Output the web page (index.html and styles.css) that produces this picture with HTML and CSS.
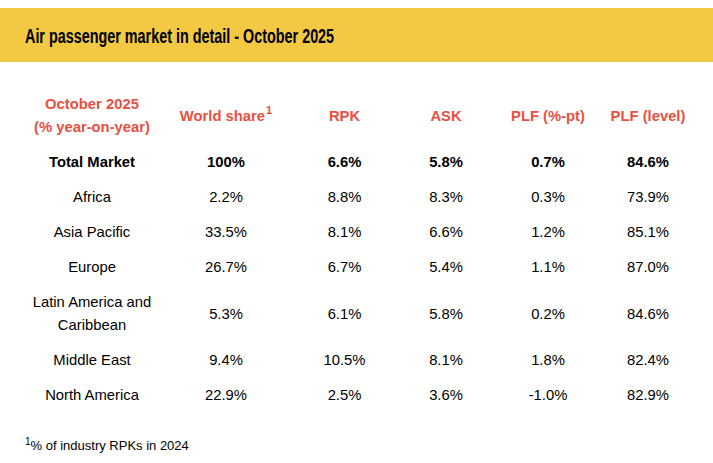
FILE: index.html
```html
<!DOCTYPE html>
<html lang="en">
<head>
<meta charset="utf-8">
<title>Air passenger market in detail - October 2025</title>
<link rel="stylesheet" href="styles.css">
</head>
<body>
<div class="page">
  <header class="band">
    <h1 class="title">Air passenger market in detail - October 2025</h1>
  </header>
  <div class="table">
    <div class="cell head">October 2025<br>(% year-on-year)</div>
    <div class="cell head"><span>World share<sup>1</sup></span></div>
    <div class="cell head">RPK</div>
    <div class="cell head">ASK</div>
    <div class="cell head">PLF (%-pt)</div>
    <div class="cell head">PLF (level)</div>

    <div class="cell bold">Total Market</div>
    <div class="cell bold">100%</div>
    <div class="cell bold">6.6%</div>
    <div class="cell bold">5.8%</div>
    <div class="cell bold">0.7%</div>
    <div class="cell bold">84.6%</div>

    <div class="cell">Africa</div>
    <div class="cell">2.2%</div>
    <div class="cell">8.8%</div>
    <div class="cell">8.3%</div>
    <div class="cell">0.3%</div>
    <div class="cell">73.9%</div>

    <div class="cell">Asia Pacific</div>
    <div class="cell">33.5%</div>
    <div class="cell">8.1%</div>
    <div class="cell">6.6%</div>
    <div class="cell">1.2%</div>
    <div class="cell">85.1%</div>

    <div class="cell">Europe</div>
    <div class="cell">26.7%</div>
    <div class="cell">6.7%</div>
    <div class="cell">5.4%</div>
    <div class="cell">1.1%</div>
    <div class="cell">87.0%</div>

    <div class="cell">Latin America and<br>Caribbean</div>
    <div class="cell">5.3%</div>
    <div class="cell">6.1%</div>
    <div class="cell">5.8%</div>
    <div class="cell">0.2%</div>
    <div class="cell">84.6%</div>

    <div class="cell">Middle East</div>
    <div class="cell">9.4%</div>
    <div class="cell">10.5%</div>
    <div class="cell">8.1%</div>
    <div class="cell">1.8%</div>
    <div class="cell">82.4%</div>

    <div class="cell">North America</div>
    <div class="cell">22.9%</div>
    <div class="cell">2.5%</div>
    <div class="cell">3.6%</div>
    <div class="cell">-1.0%</div>
    <div class="cell">82.9%</div>
  </div>
  <p class="note"><sup>1</sup>% of industry RPKs in 2024</p>
</div>
</body>
</html>
```

FILE: styles.css
```css
html, body {
  margin: 0;
  padding: 0;
  background: #ffffff;
}

.page {
  padding-top: 8px;
  font-family: "Liberation Sans", Arial, sans-serif;
  color: #000000;
}

.band {
  background: #f3c843;
  height: 54px;
  display: flex;
  align-items: center;
  padding-left: 25px;
}

.title {
  margin: 0;
  font-family: "Liberation Sans", Arial, sans-serif;
  font-size: 19.5px;
  font-weight: bold;
  color: #000000;
  line-height: 24px;
  padding-top: 1px;
  white-space: nowrap;
  transform: scaleX(0.737);
  transform-origin: left center;
}

.table {
  display: grid;
  grid-template-columns: 130px 138px 99px 104px 100px 100px;
  margin: 25px 0 0 27px;
  font-size: 14.8px;
}

.cell {
  text-align: center;
  line-height: 23px;
  padding: 6px 0;
  display: flex;
  align-items: center;
  justify-content: center;
}

.head {
  color: #e8503f;
  font-weight: bold;
}

.head sup {
  font-size: 11px;
  line-height: 0;
  vertical-align: 7px;
  margin-left: 1px;
}

.bold {
  font-weight: bold;
}

.note {
  margin: 25px 0 0 25px;
  font-size: 13px;
  line-height: 16px;
}

.note sup {
  font-size: 10px;
  line-height: 0;
  vertical-align: 5px;
}
```
